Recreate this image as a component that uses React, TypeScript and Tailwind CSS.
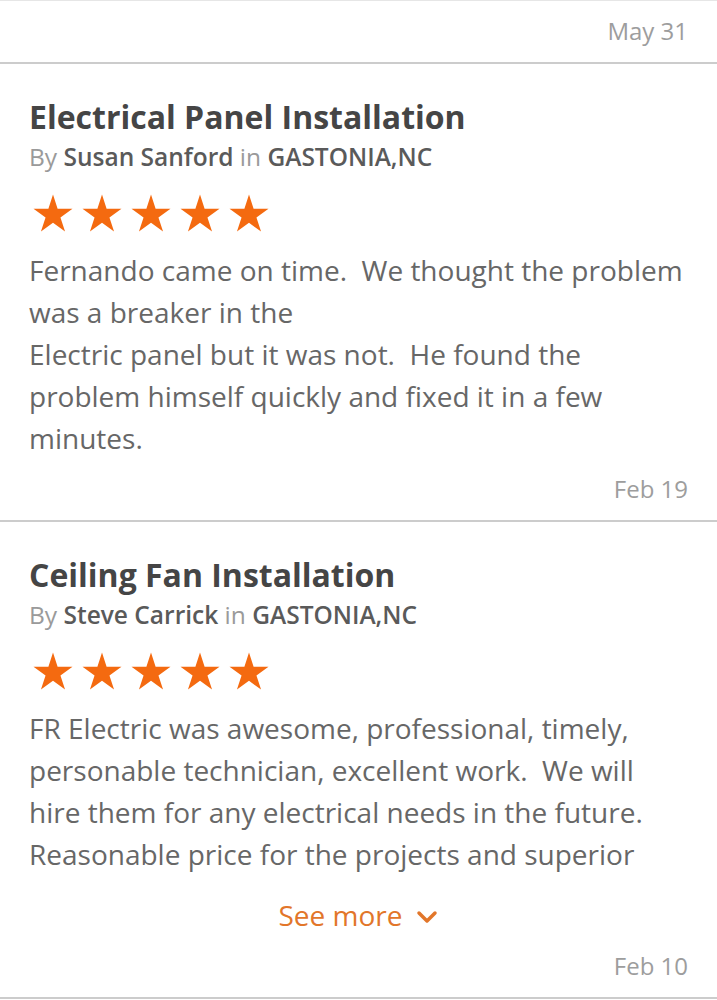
import React from "react";

type Review = {
  title: string;
  author: string;
  city: string;
  lines: string[];
  date: string;
  clamp?: boolean;
};

const reviews: Review[] = [
  {
    title: "Electrical Panel Installation",
    author: "Susan Sanford",
    city: "GASTONIA,NC",
    lines: [
      "Fernando came on time.\u00a0 We thought the problem was a breaker in the",
      "Electric panel but it was not.\u00a0 He found the problem himself quickly and fixed it in a few minutes.",
    ],
    date: "Feb 19",
  },
  {
    title: "Ceiling Fan Installation",
    author: "Steve Carrick",
    city: "GASTONIA,NC",
    lines: [
      "FR Electric was awesome, professional, timely, personable technician, excellent work.\u00a0 We will hire them for any electrical needs in the future. Reasonable price for the projects and superior",
    ],
    date: "Feb 10",
    clamp: true,
  },
];

function Star() {
  return (
    <svg width="42" height="40" viewBox="0 0 42 40" className="shrink-0">
      <polygon
        fill="#f46a10"
        points="21,0.5 25.6,14.67 40.5,14.67 28.45,23.42 33.05,37.58 21,28.83 8.95,37.58 13.55,23.42 1.5,14.67 16.4,14.67"
      />
    </svg>
  );
}

function ReviewCard({ review }: { review: Review }) {
  return (
    <div className="border-b-2 border-[#cccccc] px-[29px]">
      <h2 className="mt-[33px] text-[32px] leading-[40px] font-bold text-[#454545]">
        {review.title}
      </h2>
      <div className="mt-[3px] text-[24.5px] leading-[34px] text-[#9a9a9a]">
        By <span className="font-semibold text-[#5a5a5a]">{review.author}</span> in{" "}
        <span className="font-semibold text-[#5a5a5a]">{review.city}</span>
      </div>
      <div className="mt-[20px] flex gap-[7px] pl-[3px]">
        {[0, 1, 2, 3, 4].map((i) => (
          <Star key={i} />
        ))}
      </div>
      <div className="mt-[15px] text-[28px] leading-[42px] text-[#676767]">
        {review.lines.map((l, i) => (
          <p key={i}>{l}</p>
        ))}
      </div>
      {review.clamp && (
        <div className="mt-[19px] flex items-center justify-center gap-[12px] text-[28px] leading-[42px] text-[#e2762a]">
          <span>See more</span>
          <svg width="24" height="24" viewBox="0 0 24 24" fill="none" stroke="#e2762a" strokeWidth="3.5" strokeLinecap="round" strokeLinejoin="round" className="mt-[4px]">
            <path d="M4 8l8 8 8-8" />
          </svg>
        </div>
      )}
      <div className="flex justify-end pb-[13px] pt-[12px] text-[24px] leading-[36px] text-[#9d9d9d]">
        {review.date}
      </div>
    </div>
  );
}

export default function App() {
  return (
    <div className="min-h-[1000px] bg-white font-['Open_Sans',sans-serif]">
      <div className="border-t border-[#e6e6e6] border-b-2 border-b-[#cccccc] px-[29px]">
        <div className="flex justify-end pt-[12px] pb-[13px] text-[24px] leading-[36px] text-[#9d9d9d]">
          May 31
        </div>
      </div>
      {reviews.map((r) => (
        <ReviewCard key={r.title} review={r} />
      ))}
    </div>
  );
}
